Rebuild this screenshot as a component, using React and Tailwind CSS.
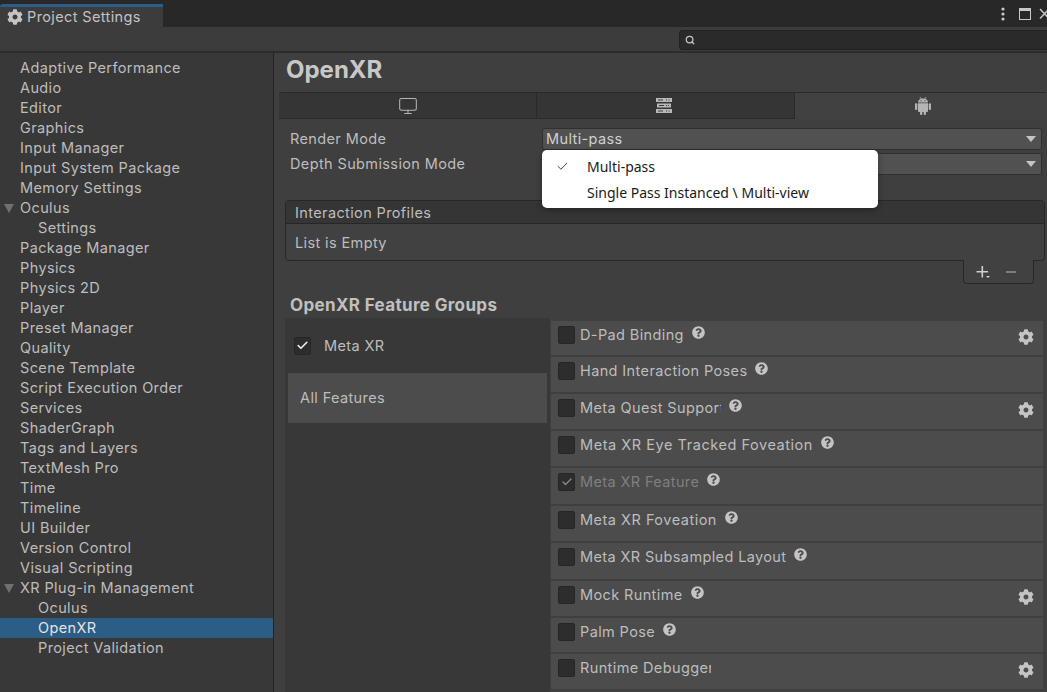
import React from 'react';
import { FaCog, FaQuestionCircle } from 'react-icons/fa';
import { Check, Monitor, Search } from 'lucide-react';

const settingsItems = [
  { label: 'Adaptive Performance' },
  { label: 'Audio' },
  { label: 'Editor' },
  { label: 'Graphics' },
  { label: 'Input Manager' },
  { label: 'Input System Package' },
  { label: 'Memory Settings' },
  { label: 'Oculus', open: true },
  { label: 'Settings', child: true },
  { label: 'Package Manager' },
  { label: 'Physics' },
  { label: 'Physics 2D' },
  { label: 'Player' },
  { label: 'Preset Manager' },
  { label: 'Quality' },
  { label: 'Scene Template' },
  { label: 'Script Execution Order' },
  { label: 'Services' },
  { label: 'ShaderGraph' },
  { label: 'Tags and Layers' },
  { label: 'TextMesh Pro' },
  { label: 'Time' },
  { label: 'Timeline' },
  { label: 'UI Builder' },
  { label: 'Version Control' },
  { label: 'Visual Scripting' },
  { label: 'XR Plug-in Management', open: true },
  { label: 'Oculus', child: true },
  { label: 'OpenXR', child: true, active: true },
  { label: 'Project Validation', child: true },
];

// row heights differ by a pixel in the reference
const features = [
  { name: 'D-Pad Binding', h: 'h-[34px]', help: true, gear: true },
  { name: 'Hand Interaction Poses', h: 'h-[35px]', help: true },
  { name: 'Meta Quest Support', h: 'h-[35px]', help: true, gear: true, clip: 'w-[141px]' },
  { name: 'Meta XR Eye Tracked Foveation', h: 'h-[35px]', help: true, track: 'tracking-[0.55px]' },
  { name: 'Meta XR Feature', h: 'h-[36px]', help: true, checked: true },
  { name: 'Meta XR Foveation', h: 'h-[35px]', help: true, track: 'tracking-[0.5px]' },
  { name: 'Meta XR Subsampled Layout', h: 'h-[36px]', help: true, clip: 'w-[206px]' },
  { name: 'Mock Runtime', h: 'h-[35px]', help: true, gear: true },
  { name: 'Palm Pose', h: 'h-[34px]', help: true },
  { name: 'Runtime Debugger', h: 'h-[35px]', gear: true, clip: 'w-[131px]' },
];

function ServerIcon() {
  return (
    <svg width="16" height="15" viewBox="0 0 16 15" fill="#b8b8b8" className="-ml-[3px]">
      <path d="M0 0h16v4H0zM1 5.500h14v4H1zM0 11h16v4H0z" />
      <path d="M2 1.500h5v1H2zM10 1.500h1v1h-1zM12.500 1.500h1v1h-1zM3 7h5v1H3zM10 7h1v1h-1zM12 7h1v1h-1zM2 12.500h5v1H2zM10 12.500h1v1h-1zM12.500 12.500h1v1h-1z" fill="#3a3a3a" />
    </svg>
  );
}

function AndroidIcon() {
  return (
    <svg width="16" height="18" viewBox="0 0 16 18" fill="#b4b4b4" className="ml-[4px]">
      <path d="M3 5.500C3 3 5 1.500 8 1.500s5 1.500 5 4z" />
      <path d="M3 6.300h10v7.700a1 1 0 0 1-1 1H4a1 1 0 0 1-1-1z" />
      <rect x="0" y="6.300" width="2.300" height="6.700" rx="1" />
      <rect x="13.700" y="6.300" width="2.300" height="6.700" rx="1" />
      <rect x="5" y="14" width="2.300" height="4" rx="1" />
      <rect x="8.700" y="14" width="2.300" height="4" rx="1" />
      <path d="M5 0l1.300 2M11 0L9.700 2" stroke="#b4b4b4" strokeWidth="0.8" />
      <path d="M5.500 3.300h1v1h-1zM9.500 3.300h1v1h-1z" fill="#414141" />
    </svg>
  );
}

function Tree() {
  return (
    <div className="w-[273px] shrink-0 pt-[5px] bg-[#383838] border-r border-[#232323] box-content">
      {settingsItems.map((item, i) => (
        <div
          key={i}
          className={`relative h-5 leading-5 ${item.child ? 'pl-[38px]' : 'pl-5'} ${item.active ? 'bg-[#2c5d87] text-[#e4e4e4]' : 'text-[#bdbdbd]'}`}
        >
          {item.open && (
            <span className="absolute left-[4px] top-[6px] w-0 h-0 border-l-[5px] border-r-[5px] border-t-[9px] border-l-transparent border-r-transparent border-t-[#707070]" />
          )}
          {item.label}
        </div>
      ))}
    </div>
  );
}

function FeatureRow({ feature }) {
  return (
    <div className={`${feature.h} mb-[2px] shrink-0 bg-[#4c4c4c] flex items-start pl-[7px] pr-[9px] pt-[5px]`}>
      <span className="w-[17px] h-[18px] shrink-0 rounded-[2px] bg-[#2d2d2d] border border-[#262626] flex items-center justify-center">
        {feature.checked && <Check size={12} strokeWidth={2.5} className="text-[#8a8a8a]" />}
      </span>
      <span className={`ml-[5px] -mt-px h-5 leading-5 whitespace-nowrap overflow-hidden ${feature.track || ''} ${feature.clip || ''} ${feature.checked ? 'text-[#7f7f7f]' : 'text-[#bdbdbd]'}`}>
        {feature.name}
      </span>
      {feature.help && <FaQuestionCircle size={13} className="ml-[8px] shrink-0 text-[#c4c4c4]" />}
      {feature.gear && <FaCog size={16} className="ml-auto mt-[3px] shrink-0 text-[#c4c4c4]" />}
    </div>
  );
}

export default function App() {
  return (
    <div className="w-[1047px] h-[692px] overflow-hidden flex flex-col bg-[#3f3f3f] text-[14.5px] tracking-[0.38px] font-['Inter',sans-serif]">
      {/* window tab strip */}
      <div className="h-[27px] shrink-0 bg-[#282828] flex items-end">
        <div className="w-[163px] h-[23px] border-t-[3px] border-[#2c5d87] rounded-tl-[3px] bg-[#3c3c3c] flex items-center pl-[7px] gap-[4px] text-[#c2c2c2]">
          <FaCog size={16} className="text-[#c4c4c4]" />
          Project Settings
        </div>
        <div className="ml-auto h-full flex items-center text-[#c8c8c8]">
          <svg width="4" height="14" viewBox="0 0 4 14" fill="currentColor"><circle cx="2" cy="2" r="1.600" /><circle cx="2" cy="7" r="1.600" /><circle cx="2" cy="12" r="1.600" /></svg>
          <svg width="12" height="12" viewBox="0 0 12 12" className="ml-[14px]"><rect x="0.500" y="0.500" width="11" height="11" fill="none" stroke="currentColor" /><rect x="0" y="0" width="12" height="3" fill="currentColor" /></svg>
          <svg width="8" height="12" viewBox="0 0 8 12" stroke="currentColor" strokeWidth="1.400" className="ml-[8px]"><path d="M1 1l9 9.500M1 10.500L10 1" /></svg>
        </div>
      </div>

      {/* search toolbar */}
      <div className="h-[26px] shrink-0 bg-[#3c3c3c] border-b-2 border-[#2c2c2c] flex items-start pt-[3px] pl-[679px]">
        <div className="flex-1 h-5 rounded-l-[4px] bg-[#2a2a2a] border-y border-l border-[#212121] flex items-center pl-[5px]">
          <Search size={10} strokeWidth={3} className="text-[#c4c4c4]" />
        </div>
      </div>

      <div className="flex-1 min-h-0 flex">
        <Tree />

        <main className="relative flex-1 min-w-0 pl-[5px] bg-[#3f3f3f]">
          <h1 className="h-[39px] pl-[7px] pt-[1px] text-[24px] leading-[32px] font-bold tracking-normal text-[#c8c8c8]">OpenXR</h1>

          {/* build target tabs */}
          <div className="h-[27px] flex rounded-t-[3px] border-t border-[#292929] bg-[#353535]">
            <div className="w-[258px] border-r border-b border-[#292929] flex items-center justify-center">
              <Monitor size={20} strokeWidth={1.25} className="text-[#b4b4b4]" />
            </div>
            <div className="w-[258px] border-r border-b border-[#292929] flex items-center justify-center">
              <ServerIcon />
            </div>
            <div className="flex-1 bg-[#414141] flex items-center justify-center">
              <AndroidIcon />
            </div>
          </div>

          {/* render settings */}
          <div className="pt-[9px] pl-[11px] pr-[5px] text-[#bdbdbd]">
            <div className="h-[22px] flex items-center">
              <span className="w-[252px] shrink-0">Render Mode</span>
              <div className="flex-1 h-[22px] rounded-[3px] bg-[#515151] border border-[#303030] pl-[3px] pr-[5px] flex items-center justify-between text-[#d0d0d0]">
                Multi-pass
                <span className="w-0 h-0 border-l-[5px] border-r-[5px] border-t-[6px] border-l-transparent border-r-transparent border-t-[#c4c4c4]" />
              </div>
            </div>
            <div className="h-[22px] mt-[3px] flex items-center">
              <span className="w-[252px] shrink-0">Depth Submission Mode</span>
              <div className="flex-1 h-[22px] rounded-[3px] bg-[#515151] border border-[#303030] pr-[5px] flex items-center justify-end">
                <span className="w-0 h-0 border-l-[5px] border-r-[5px] border-t-[6px] border-l-transparent border-r-transparent border-t-[#c4c4c4]" />
              </div>
            </div>
          </div>

          {/* interaction profiles list */}
          <div className="mt-[25px] ml-[6px] mr-[2px] rounded-[4px] border border-[#272727] bg-[#414141]">
            <div className="h-[23px] pl-[9px] leading-[23px] bg-[#353535] border-b border-[#272727] rounded-t-[4px] text-[#bdbdbd]">Interaction Profiles</div>
            <div className="h-[36px] pl-[9px] leading-[37px] text-[#bdbdbd]">List is Empty</div>
          </div>
          <div className="ml-[684px] w-[71px] h-[24px] -mt-px relative bg-[#414141] border-x border-b border-[#272727] rounded-b-[4px] flex items-center pl-[12px] gap-[15px]">
            <svg width="15" height="14" viewBox="0 0 15 14" fill="#d0d0d0"><path d="M5.500 1h1.600v5h5v1.600h-5v5H5.500v-5h-5V6h5zM10 11h4l-2 2z" /></svg>
            <span className="w-[10px] h-[2px] bg-[#7d7d7d]" />
          </div>

          <h2 className="h-[34px] pl-[11px] pt-[9px] text-[17px] leading-[24px] font-bold tracking-[0.35px] text-[#c0c0c0]">OpenXR Feature Groups</h2>

          {/* feature groups */}
          <div className="flex pl-[6px] h-[374px]">
            <div className="w-[265px] shrink-0 bg-[#383838] px-[3px] pt-[2px]">
              <div className="h-[53px] pl-[6px] pb-[2px] flex items-center gap-[13px] text-[#bdbdbd]">
                <span className="w-[17px] h-[18px] rounded-[2px] bg-[#2d2d2d] border border-[#262626] flex items-center justify-center">
                  <Check size={13} strokeWidth={3} className="text-[#f0f0f0]" />
                </span>
                Meta XR
              </div>
              <div className="h-[50px] pl-[12px] flex items-center bg-[#4c4c4c] text-[#bdbdbd]">All Features</div>
            </div>
            <div className="flex-1 min-w-0 ml-[1px] mr-[4px] pt-[3px] flex flex-col">
              {features.map((f) => <FeatureRow key={f.name} feature={f} />)}
            </div>
          </div>

          {/* dropdown popup */}
          <div className="absolute left-[268px] top-[97px] w-[336px] h-[58px] rounded-[5px] bg-white shadow-[0_2px_6px_rgba(0,0,0,0.35)] font-['Noto_Sans',sans-serif] text-[14px] tracking-normal text-[#1a1a1a]">
            <div className="h-[29px] pl-[45px] leading-[33px] relative">
              <Check size={13} strokeWidth={1.5} className="absolute left-[14px] top-[10px]" />
              Multi-pass
            </div>
            <div className="h-[29px] pl-[45px] leading-[27px]">Single Pass Instanced \ Multi-view</div>
          </div>
        </main>
      </div>
    </div>
  );
}
